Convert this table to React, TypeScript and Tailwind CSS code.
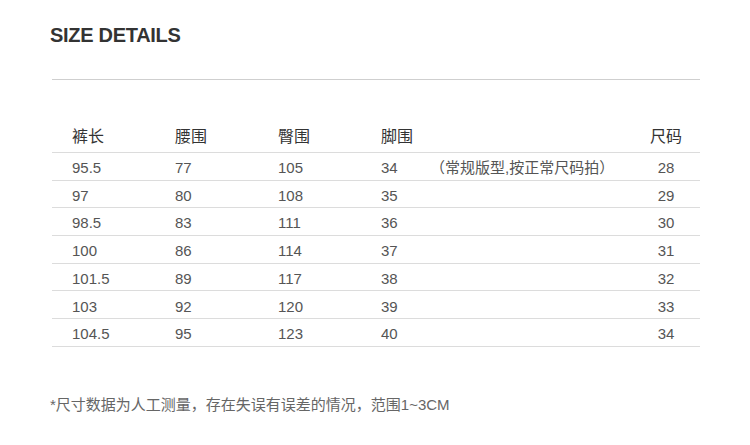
type SizeRow = {
  length: string;
  waist: string;
  hip: string;
  hem: string;
  note?: string;
  size: string;
};

const rows: SizeRow[] = [
  { length: "95.5", waist: "77", hip: "105", hem: "34", note: "（常规版型,按正常尺码拍）", size: "28" },
  { length: "97", waist: "80", hip: "108", hem: "35", size: "29" },
  { length: "98.5", waist: "83", hip: "111", hem: "36", size: "30" },
  { length: "100", waist: "86", hip: "114", hem: "37", size: "31" },
  { length: "101.5", waist: "89", hip: "117", hem: "38", size: "32" },
  { length: "103", waist: "92", hip: "120", hem: "39", size: "33" },
  { length: "104.5", waist: "95", hip: "123", hem: "40", size: "34" },
];

const font = "font-['Liberation_Sans','Noto_Sans_CJK_SC',sans-serif]";

export default function App() {
  return (
    <div className={`w-[750px] h-[445px] bg-white overflow-hidden ${font}`}>
      <h1 className="pt-[23px] pl-[50px] text-[20px] leading-[24px] font-bold tracking-[-0.3px] text-[#333]">
        SIZE DETAILS
      </h1>
      <div className="ml-[52px] mt-[32px] w-[648px] h-px bg-[#cfcfcf]" />

      <div className="ml-[52px] mt-[39px] w-[648px]">
        <div className="flex items-center h-[34px] pt-[2px] border-b border-[#dcdcdc] text-[16px] text-[#333]">
          <div className="w-[103px] pl-[20px]">裤长</div>
          <div className="w-[103px] pl-[20px]">腰围</div>
          <div className="w-[103px] pl-[20px]">臀围</div>
          <div className="w-[69px] pl-[20px]">脚围</div>
          <div className="w-[202px]" />
          <div className="w-[68px] text-center">尺码</div>
        </div>
        {rows.map((r) => (
          <div
            key={r.size}
            className="flex items-center h-[27.7px] pt-[4px] border-b border-[#dcdcdc] text-[15px] text-[#555]"
          >
            <div className="w-[103px] pl-[20px]">{r.length}</div>
            <div className="w-[103px] pl-[20px]">{r.waist}</div>
            <div className="w-[103px] pl-[20px]">{r.hip}</div>
            <div className="w-[69px] pl-[20px]">{r.hem}</div>
            <div className="w-[202px] whitespace-nowrap">{r.note}</div>
            <div className="w-[68px] text-center">{r.size}</div>
          </div>
        ))}
      </div>

      <p className="pl-[50px] mt-[48px] text-[15px] leading-[20px] text-[#666]">
        *尺寸数据为人工测量，存在失误有误差的情况，范围1~3CM
      </p>
    </div>
  );
}
